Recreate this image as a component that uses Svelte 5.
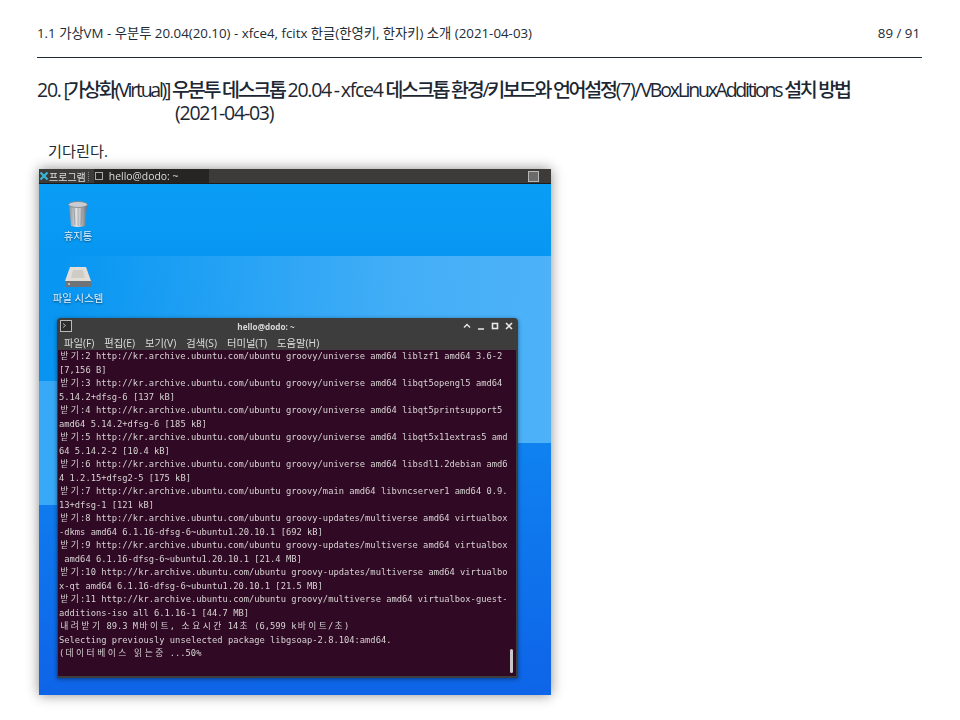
<script>
  // terminal scrollback, hangul cells are two columns wide
  const termLines = [
    '받기:2 http://kr.archive.ubuntu.com/ubuntu groovy/universe amd64 liblzf1 amd64 3.6-2',
    '[7,156 B]',
    '받기:3 http://kr.archive.ubuntu.com/ubuntu groovy/universe amd64 libqt5opengl5 amd64',
    '5.14.2+dfsg-6 [137 kB]',
    '받기:4 http://kr.archive.ubuntu.com/ubuntu groovy/universe amd64 libqt5printsupport5',
    'amd64 5.14.2+dfsg-6 [185 kB]',
    '받기:5 http://kr.archive.ubuntu.com/ubuntu groovy/universe amd64 libqt5x11extras5 amd',
    '64 5.14.2-2 [10.4 kB]',
    '받기:6 http://kr.archive.ubuntu.com/ubuntu groovy/universe amd64 libsdl1.2debian amd6',
    '4 1.2.15+dfsg2-5 [175 kB]',
    '받기:7 http://kr.archive.ubuntu.com/ubuntu groovy/main amd64 libvncserver1 amd64 0.9.',
    '13+dfsg-1 [121 kB]',
    '받기:8 http://kr.archive.ubuntu.com/ubuntu groovy-updates/multiverse amd64 virtualbox',
    '-dkms amd64 6.1.16-dfsg-6~ubuntu1.20.10.1 [692 kB]',
    '받기:9 http://kr.archive.ubuntu.com/ubuntu groovy-updates/multiverse amd64 virtualbox',
    ' amd64 6.1.16-dfsg-6~ubuntu1.20.10.1 [21.4 MB]',
    '받기:10 http://kr.archive.ubuntu.com/ubuntu groovy-updates/multiverse amd64 virtualbo',
    'x-qt amd64 6.1.16-dfsg-6~ubuntu1.20.10.1 [21.5 MB]',
    '받기:11 http://kr.archive.ubuntu.com/ubuntu groovy/multiverse amd64 virtualbox-guest-',
    'additions-iso all 6.1.16-1 [44.7 MB]',
    '내려받기 89.3 M바이트, 소요시간 14초 (6,599 k바이트/초)',
    'Selecting previously unselected package libgsoap-2.8.104:amd64.',
    '(데이터베이스 읽는중 ...50%',
  ];

  const menus = ['파일(F)', '편집(E)', '보기(V)', '검색(S)', '터미널(T)', '도움말(H)'];

  const cells = (line) => line.split(/([가-힣])/).filter(Boolean);
  const isWide = (s) => /[가-힣]/.test(s);
</script>

<div class="page">
  <header class="running">
    <span>1.1 가상VM - 우분투 20.04(20.10) - xfce4, fcitx 한글(한영키, 한자키) 소개 (2021-04-03)</span>
    <span>89 / 91</span>
  </header>

  <h1><span class="num">20.</span> [가상화(Virtual)] 우분투 데스크톱 <span class="num">20.04</span> - <span class="num">xfce4</span> 데스크톱 환경/키보드와 언어설정<span class="num">(7)/</span>VBoxLinuxAdditions 설치 방법 <span class="num">(2021-04-03)</span></h1>

  <p class="body">기다린다.</p>

  <div class="shot">
    <div class="panel">
      <svg class="xlogo" width="10" height="10" viewBox="0 0 10 10">
        <path d="M1.5 1.5 L8.5 8.5 M8.5 1.5 L1.5 8.5" stroke="#39b6d8" stroke-width="2.2" />
      </svg>
      <span class="menu-label">프로그램</span>
      <span class="grip"></span>
      <div class="task">
        <span class="task-icon"></span>
        <span>hello@dodo: ~</span>
      </div>
      <span class="workspace"></span>
    </div>

    <div class="desktop">
      <div class="icon trash">
        <svg width="24" height="28" viewBox="0 0 24 28">
          <defs>
            <linearGradient id="can" x1="0" x2="1" y1="0" y2="0">
              <stop offset="0" stop-color="#8b9096" />
              <stop offset="0.45" stop-color="#e6e8ea" />
              <stop offset="1" stop-color="#6d7278" />
            </linearGradient>
          </defs>
          <path d="M3 5 L21 5 L19 26 Q12 28 5 26 Z" fill="url(#can)" />
          <ellipse cx="12" cy="4.5" rx="9.5" ry="3" fill="#c9ccd0" stroke="#7d8288" stroke-width="0.8" />
          <path d="M8 8 L9 25 M12 8 L12 26 M16 8 L15 25" stroke="#7d8288" stroke-width="0.8" opacity="0.7" />
        </svg>
        <span>휴지통</span>
      </div>
      <div class="icon disk">
        <svg width="28" height="24" viewBox="0 0 28 24">
          <path d="M6 2 L22 2 L27 16 L1 16 Z" fill="#e3dfd8" />
          <path d="M9 5 L19 5 L21 13 L7 13 Z" fill="#cfcbc5" />
          <path d="M1 16 L27 16 L27 21 Q27 22 26 22 L2 22 Q1 22 1 21 Z" fill="#6f7478" />
          <circle cx="5" cy="19" r="1.1" fill="#c8d0d4" />
        </svg>
        <span>파일 시스템</span>
      </div>

      <div class="terminal">
        <div class="titlebar">
          <svg class="term-icon" width="12" height="12" viewBox="0 0 12 12" fill="none">
            <rect x="0.5" y="0.5" width="11" height="11" fill="#2c2c2c" stroke="#b9b9b9" />
            <path d="M3 3.5 L5.5 5.5 L3 7.5" stroke="#d0d0d0" stroke-width="0.8" />
          </svg>
          <span class="win-title">hello@dodo: ~</span>
          <div class="win-buttons">
            <svg width="8" height="8" viewBox="0 0 8 8" fill="none"><path d="M1 5.5 L4 2.5 L7 5.5" stroke="#e8e8e8" stroke-width="1.4" /></svg>
            <svg width="8" height="8" viewBox="0 0 8 8" fill="none"><path d="M1 7 L7 7" stroke="#e8e8e8" stroke-width="1.4" /></svg>
            <svg width="8" height="8" viewBox="0 0 8 8" fill="none"><rect x="1.5" y="1.5" width="5" height="5" stroke="#e8e8e8" stroke-width="1.6" /></svg>
            <svg width="8" height="8" viewBox="0 0 8 8" fill="none"><path d="M1 1 L7 7 M7 1 L1 7" stroke="#e8e8e8" stroke-width="1.6" /></svg>
          </div>
        </div>
        <nav class="menubar">
          {#each menus as m}
            <span>{m}</span>
          {/each}
        </nav>
        <div class="output">
          {#each termLines as line}
            <div class="row">{#each cells(line) as c}{#if isWide(c)}<span class="wide">{c}</span>{:else}{c}{/if}{/each}</div>
          {/each}
          <span class="scrollbar"></span>
        </div>
      </div>
    </div>
  </div>
</div>

<style>
  :global(body) {
    margin: 0;
    background: #fff;
  }

  .page {
    width: 960px;
    height: 720px;
    box-sizing: border-box;
    padding: 24px 38px 0 37px;
    overflow: hidden;
    font-family: "Open Sans", "Noto Sans CJK KR", sans-serif;
    color: #222b35;
  }

  .running {
    display: flex;
    justify-content: space-between;
    height: 34px;
    padding-right: 2px;
    box-sizing: border-box;
    border-bottom: 1px solid #1e2a36;
    font-size: 13.3px;
    line-height: 18px;
  }

  h1 {
    margin: 21px 60px 0 0;
    padding-left: 138px;
    text-indent: -138px;
    font-size: 19.5px;
    line-height: 22.5px;
    font-weight: 500;
    letter-spacing: -2.25px;
    color: #1c2733;
  }

  .num {
    letter-spacing: -1.25px;
  }

  .body {
    margin: 17px 0 0 11px;
    font-size: 15.2px;
    line-height: 20px;
  }

  .shot {
    width: 512px;
    height: 526px;
    margin: 8px 0 0 2px;
    display: flex;
    flex-direction: column;
    box-shadow: 0 0 12px rgba(0, 0, 0, 0.45);
    filter: blur(0.35px);
  }

  .panel {
    height: 15px;
    flex: none;
    display: flex;
    align-items: center;
    background: #3c3b39;
    color: #dcdcdc;
    font-size: 10px;
    border-bottom: 1px solid #1c1c1c;
    box-sizing: border-box;
  }

  .xlogo {
    flex: none;
  }

  .grip {
    width: 3px;
    height: 9px;
    margin: 0 2px;
    border-left: 1px dotted #888;
  }

  .task {
    width: 115px;
    height: 100%;
    display: flex;
    align-items: center;
    gap: 6px;
    padding-left: 1px;
    box-sizing: border-box;
    background: #262524;
    font-size: 10.4px;
  }

  .task-icon {
    width: 6px;
    height: 6px;
    border: 1px solid #aaa;
  }

  .workspace {
    width: 11px;
    height: 11px;
    margin-left: auto;
    margin-right: 12px;
    background: #6b6b6b;
    border: 1px solid #b8b8b8;
    box-sizing: border-box;
  }

  .desktop {
    flex: 1;
    position: relative;
    background:
      linear-gradient(#38a9f6, #38a9f6) 0 197px / 18px 124px no-repeat,
      linear-gradient(to right, rgba(77, 178, 248, 0) 0 5%, rgba(77, 178, 248, 0.85) 70%, #4db2f8 100%) 0 72px / 100% 187px no-repeat,
      linear-gradient(to bottom, #0a9df6 0, #0797f2 72px, #0a92f0 259px, #0f82f0 259px, #0e64e8 100%);
  }

  .icon {
    position: absolute;
    display: flex;
    flex-direction: column;
    align-items: center;
    color: #dff2ff;
    font-size: 10.4px;
    line-height: 12px;
    text-shadow: 0 1px 2px rgba(0, 0, 0, 0.55);
  }

  .trash {
    left: 17px;
    top: 16px;
    width: 44px;
    gap: 2px;
  }

  .disk {
    left: 9px;
    top: 81px;
    width: 60px;
    gap: 3px;
  }

  .terminal {
    position: absolute;
    left: 18px;
    top: 134px;
    width: 461px;
    height: 360px;
    box-sizing: border-box;
    padding: 0 2px 2px 1px;
    display: flex;
    flex-direction: column;
    background: #3d3d3d;
    border-radius: 4px 4px 0 0;
    box-shadow: 0 1px 4px rgba(0, 0, 0, 0.45);
    overflow: hidden;
  }

  .titlebar {
    height: 16px;
    flex: none;
    position: relative;
    display: flex;
    align-items: center;
    padding: 0 3px 0 2px;
    color: #d8d8d8;
    font-size: 8.2px;
    font-weight: 700;
  }

  .win-title {
    position: absolute;
    left: 0;
    right: 42px;
    text-align: center;
  }

  .win-buttons {
    margin-left: auto;
    display: flex;
    gap: 6px;
  }

  .menubar {
    height: 16px;
    flex: none;
    display: flex;
    align-items: center;
    gap: 10px;
    padding-left: 6px;
    color: #dcdcdc;
    font-size: 10.3px;
  }

  .output {
    flex: 1;
    position: relative;
    background: #300a24;
    color: #d6d2d2;
    padding-left: 1px;
    font-family: "DejaVu Sans Mono", "Noto Sans CJK KR", monospace;
    font-size: 8.78px;
    line-height: 13.5px;
  }

  .row {
    height: 13.5px;
    white-space: pre;
  }

  .wide {
    display: inline-block;
    width: 2ch;
    text-align: center;
  }

  .scrollbar {
    position: absolute;
    right: 3px;
    bottom: 3px;
    width: 3px;
    height: 24px;
    border-radius: 2px;
    background: #c9c6c8;
  }
</style>
